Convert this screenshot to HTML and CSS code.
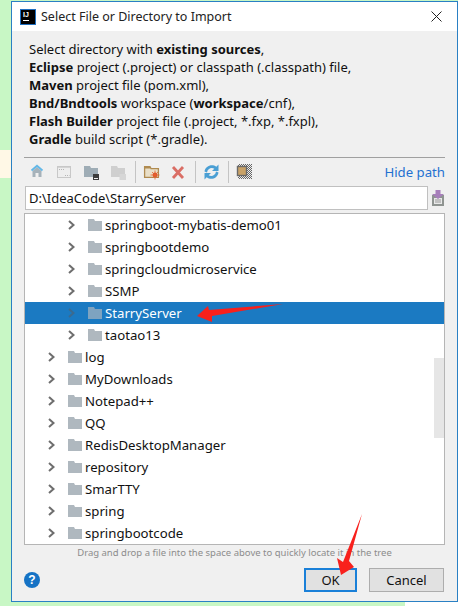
FILE: index.html
```html
<!DOCTYPE html>
<html lang="en">
<head>
    <meta charset="UTF-8">
    <title>Select File or Directory to Import</title>
    <link rel="stylesheet" href="styles.css">
</head>
<body>
<svg width="0" height="0" class="defs">
    <symbol id="folder" viewBox="0 0 14 12">
        <path d="M0 0H6L7 2H14V12H0Z"/>
    </symbol>
    <symbol id="chev" viewBox="0 0 7 10">
        <path d="M1 1L5.5 5L1 9" fill="none" stroke="currentColor" stroke-width="2"/>
    </symbol>
</svg>

<div class="dialog">
    <div class="titlebar">
        <div class="logo"><span class="logo-text">IJ</span><span class="logo-line"></span></div>
        <span class="title">Select File or Directory to Import</span>
        <svg class="close" width="11" height="11" viewBox="0 0 11 11"><path d="M.5 .5L10.5 10.5M10.5 .5L.5 10.5" stroke="#222" stroke-width="1"/></svg>
    </div>

    <div class="content">
        <div class="desc">
            Select directory with <b>existing sources</b>,<br>
            <b>Eclipse</b> project (.project) or classpath (.classpath) file,<br>
            <b>Maven</b> project file (pom.xml),<br>
            <b>Bnd/Bndtools</b> workspace (<b>workspace</b>/cnf),<br>
            <b>Flash Builder</b> project file (.project, *.fxp, *.fxpl),<br>
            <b>Gradle</b> build script (*.gradle).
        </div>

        <div class="chooser">
            <div class="toolbar">
                <!-- every tool icon sits in a 27x16 slot -->
                <svg class="tool" viewBox="0 0 27 16"><path d="M13 3L8.5 7V13H11.5V9H14.5V13H17.5V7Z" fill="#a6b2ba"/><path d="M7.5 6.5L13 1.8L18.500 6.500" fill="none" stroke="#62b8e8" stroke-width="1.800"/></svg>
                <svg class="tool" viewBox="0 0 27 16"><rect x="6.500" y="2.500" width="13" height="11" fill="#eee" stroke="#c8c8c8"/><rect x="7" y="3" width="12" height="1" fill="#d4d4d4"/><path d="M8 5.500h1M10 5.500h1M12 5.500h1M14 11.500h1M16 11.500h1M18 11.500h.5" stroke="#b5b5b5"/></svg>
                <svg class="tool" viewBox="0 0 27 16"><path d="M6 2H12L13 4H20V13H6Z" fill="#9fadb6"/><rect x="15" y="10" width="6" height="6" fill="#3c3c3c"/><rect x="16" y="14" width="4" height="1" fill="#eee"/></svg>
                <svg class="tool" viewBox="0 0 27 16"><path d="M6 2H12L13 4H20V13H6Z" fill="#cfcfcf"/><rect x="14.500" y="10" width="6.500" height="6" fill="#d6d6d6"/></svg>
                <span class="sep"></span>
                <svg class="tool" viewBox="0 0 27 16"><path d="M6.600 2.600H12L13 4.600H20.400V13.400H6.600Z" fill="#e9dfc8" stroke="#b08b50" stroke-width="1.300"/><path d="M7 3H12V4.500H7Z" fill="#b08b50"/><circle cx="17" cy="11" r="2.400" fill="#e0552b"/><path d="M17 6.500V15.500M12.500 11H21.500M14 8L20 14M20 8L14 14" stroke="#e4602f" stroke-width=".8"/></svg>
                <svg class="tool" viewBox="0 0 27 16"><path d="M8 3L18 14M18 3L8 14" stroke="#da6e65" stroke-width="2.800"/></svg>
                <span class="sep"></span>
                <svg class="tool" viewBox="0 0 27 16"><g transform="translate(5.500 0)"><path d="M15 .5V7H8.500L10.800 4.700C8 3 4 4.500 3.500 8.500L1 7.500C2 1.500 8.500 -.5 12.800 2.700Z" fill="#4a9fd4"/><path d="M1 15.500V9H7.500L5.200 11.300C8 13 12 11.500 12.500 7.500L15 8.500C14 14.500 7.500 16.500 3.200 13.300Z" fill="#4a9fd4"/></g></svg>
                <span class="sep"></span>
                <svg class="tool" viewBox="0 0 27 16"><defs><pattern id="dots" width="2" height="2" patternUnits="userSpaceOnUse"><rect width="1" height="1" fill="#666"/><rect x="1" y="1" width="1" height="1" fill="#666"/></pattern></defs><rect x="7" y="0" width="14" height="15" fill="url(#dots)"/><rect x="6.500" y="2.500" width="9" height="9" fill="#c9a267" stroke="#6a6a6a" stroke-width="1.400"/></svg>
                <a class="hide-path">Hide path</a>
            </div>

            <div class="path-row">
                <input class="path" type="text" value="D:\IdeaCode\StarryServer">
                <svg width="14" height="16" viewBox="0 0 14 16"><rect x="1" y="5" width="12" height="11" fill="#8f9491"/><rect x="3" y="8" width="8" height="6" fill="#e9e9e9"/><path d="M4 10h6M4 12h6" stroke="#999"/><path d="M4.500 0H9.500V4H13L7 9L1 4H4.500Z" fill="#a77fbb"/></svg>
            </div>

            <div class="tree">
                <div class="row sub"><svg class="chev"><use href="#chev"/></svg><svg class="folder"><use href="#folder"/></svg><span>springboot-mybatis-demo01</span></div>
                <div class="row sub"><svg class="chev"><use href="#chev"/></svg><svg class="folder"><use href="#folder"/></svg><span>springbootdemo</span></div>
                <div class="row sub"><svg class="chev"><use href="#chev"/></svg><svg class="folder"><use href="#folder"/></svg><span>springcloudmicroservice</span></div>
                <div class="row sub"><svg class="chev"><use href="#chev"/></svg><svg class="folder"><use href="#folder"/></svg><span>SSMP</span></div>
                <div class="row sub selected"><svg class="chev"><use href="#chev"/></svg><svg class="folder"><use href="#folder"/></svg><span>StarryServer</span></div>
                <div class="row sub"><svg class="chev"><use href="#chev"/></svg><svg class="folder"><use href="#folder"/></svg><span>taotao13</span></div>
                <div class="row"><svg class="chev"><use href="#chev"/></svg><svg class="folder"><use href="#folder"/></svg><span>log</span></div>
                <div class="row"><svg class="chev"><use href="#chev"/></svg><svg class="folder"><use href="#folder"/></svg><span>MyDownloads</span></div>
                <div class="row"><svg class="chev"><use href="#chev"/></svg><svg class="folder"><use href="#folder"/></svg><span>Notepad++</span></div>
                <div class="row"><svg class="chev"><use href="#chev"/></svg><svg class="folder"><use href="#folder"/></svg><span>QQ</span></div>
                <div class="row"><svg class="chev"><use href="#chev"/></svg><svg class="folder"><use href="#folder"/></svg><span>RedisDesktopManager</span></div>
                <div class="row"><svg class="chev"><use href="#chev"/></svg><svg class="folder"><use href="#folder"/></svg><span>repository</span></div>
                <div class="row"><svg class="chev"><use href="#chev"/></svg><svg class="folder"><use href="#folder"/></svg><span>SmarTTY</span></div>
                <div class="row"><svg class="chev"><use href="#chev"/></svg><svg class="folder"><use href="#folder"/></svg><span>spring</span></div>
                <div class="row"><svg class="chev"><use href="#chev"/></svg><svg class="folder"><use href="#folder"/></svg><span>springbootcode</span></div>
                <div class="thumb"></div>
            </div>
            <p class="hint">Drag and drop a file into the space above to quickly locate it in the tree</p>
        </div>

        <div class="footer">
            <div class="help">?</div>
            <div class="btn btn-ok">OK</div>
            <div class="btn btn-cancel">Cancel</div>
        </div>
    </div>
</div>

<!-- red arrows painted over the screenshot -->
<svg class="arrows" width="458" height="606" viewBox="0 0 458 606">
    <polygon points="197,316 208,306 209,310 283,304 212,316 212,322" fill="#f8201c"/>
    <polygon points="362,514 349,561 354,567 341,575 337,558 343,562" fill="#f8201c"/>
</svg>
</body>
</html>
```

FILE: styles.css
```css
* {
    box-sizing: border-box;
}
html, body {
    height: 100%;
}
body {
    margin: 0;
    padding: 1px 0 0 11px;
    overflow: hidden;
    font-family: "Noto Sans", "Open Sans", sans-serif;
    color: #111;
    background-color: #c8f7c5;
    background-image: linear-gradient(#fff8e6, #fff8e6), linear-gradient(#fff, #fff);
    background-repeat: no-repeat;
    background-size: 11px 28px, 53px 4px;
    background-position: 0 150px, 405px 602px;
}
.defs {
    position: absolute;
}
.dialog {
    width: 447px;
    height: 601px;
    border: 1px solid #2a80c4;
    background: #f0f0f0;
    display: flex;
    flex-direction: column;
}
.titlebar {
    height: 29px;
    flex: none;
    background: #fff;
    display: flex;
    align-items: center;
    padding: 0 15px 0 8px;
}
.logo {
    width: 16px;
    height: 16px;
    background: #000;
    border: 1px solid #1f6fc0;
    color: #fff;
    display: flex;
    flex-direction: column;
    align-items: flex-start;
    padding-left: 2px;
    margin-right: 5px;
}
.logo-text {
    font: bold 7px/9px "Liberation Sans", sans-serif;
}
.logo-line {
    width: 6px;
    height: 1px;
    background: #fff;
    margin-top: 1px;
}
.title {
    font-size: 12.5px;
    color: #222;
    flex: 1;
}
.content {
    flex: 1;
    display: flex;
    flex-direction: column;
    padding: 9px 12px 0 12px;
}
.desc {
    font-size: 13px;
    line-height: 18px;
    padding-left: 5px;
    height: 117px;
    white-space: nowrap;
}
.chooser {
    border-top: 1px solid #a0a0a0;
}
.toolbar {
    height: 28px;
    display: flex;
    align-items: center;
}
.tool {
    width: 27px;
    height: 16px;
    flex: none;
}
.sep {
    width: 1px;
    height: 22px;
    background: #c4c4c4;
    margin: 0 2px 0 3px;
}
.hide-path {
    margin-left: auto;
    color: #2470d0;
    font-size: 13.2px;
}
.path-row {
    display: flex;
    align-items: center;
    gap: 3px;
    height: 24px;
}
.path {
    width: 403px;
    height: 24px;
    margin-left: 1px;
    border: 1px solid #c0c0c0;
    background: #fff;
    font: 13px "Noto Sans", sans-serif;
    color: #111;
    padding: 0 3px;
    outline: none;
}
.tree {
    position: relative;
    margin-top: 3px;
    height: 332px;
    border: 1px solid #b5b5b5;
    background: #fff;
    overflow: hidden;
}
.row {
    height: 22px;
    display: flex;
    align-items: center;
    padding-left: 23px;
    font-size: 13.2px;
    color: #111;
}
.row.sub {
    padding-left: 43px;
}
.chev {
    width: 7px;
    height: 10px;
    color: #6e6e6e;
    margin-right: 13px;
    flex: none;
}
.folder {
    width: 14px;
    height: 12px;
    fill: #afb8bf;
    margin-right: 3px;
    flex: none;
}
.selected {
    background: #1b7ac2;
    color: #fff;
}
.selected .chev {
    color: #3b6a8f;
}
.selected .folder {
    fill: #7ea3c0;
}
.thumb {
    position: absolute;
    right: 0;
    top: 144px;
    width: 10px;
    height: 80px;
    background: #e6e6e6;
}
.hint {
    margin: 0;
    height: 16px;
    font-size: 9.5px;
    line-height: 16px;
    color: #8c8c8c;
    text-align: center;
}
.footer {
    display: flex;
    align-items: flex-start;
    padding-top: 7px;
}
.help {
    width: 16px;
    height: 16px;
    border-radius: 50%;
    background: #1673c5;
    color: #fff;
    font: bold 12px/16px "Liberation Sans", sans-serif;
    text-align: center;
    margin: 4px auto 0 0;
}
.btn {
    height: 24px;
    background: #e1e1e1;
    font-size: 13px;
    line-height: 20px;
    text-align: center;
    color: #111;
}
.btn-ok {
    width: 53px;
    border: 2px solid #1a80d8;
    margin-right: 12px;
}
.btn-cancel {
    width: 75px;
    border: 1px solid #adadad;
    line-height: 22px;
    margin-right: 1px;
}
.arrows {
    position: absolute;
    left: 0;
    top: 0;
    pointer-events: none;
}
```
